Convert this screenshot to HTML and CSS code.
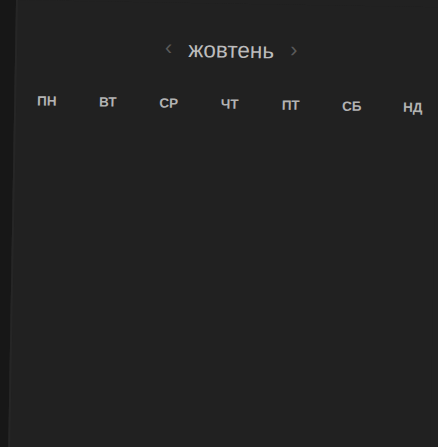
FILE: index.html
```html
<!DOCTYPE html>
<html lang="uk">
<head>
<meta charset="utf-8">
<link rel="stylesheet" href="styles.css">
</head>
<body>
<div class="panel">
  <div class="month">
    <span class="arrow">&lsaquo;</span>
    <span class="title">жовтень</span>
    <span class="arrow">&rsaquo;</span>
  </div>
  <div class="weekdays">
    <span>ПН</span><span>ВТ</span><span>СР</span><span>ЧТ</span><span>ПТ</span><span>СБ</span><span>НД</span>
  </div>
</div>
</body>
</html>
```
FILE: styles.css
```css
html, body {
  margin: 0;
  padding: 0;
  background: #171717;
  overflow: hidden;
  width: 438px;
  height: 447px;
}
.panel {
  margin-left: 16px;
  width: 422px;
  height: 447px;
  background: #212121;
  border-left: 2px solid #262626;
  box-shadow: 40px 0 0 #212121, 0 40px 0 #212121, 0 -40px 0 #212121, 40px -40px 0 #212121, 40px 40px 0 #212121;
  transform: rotate(1deg);
  transform-origin: 0 0;
  font-family: "Liberation Sans", Arial, sans-serif;
  padding-top: 33px;
  box-sizing: border-box;
}
.month {
  display: flex;
  justify-content: center;
  align-items: center;
  gap: 16px;
  width: 428px;
  height: 28px;
}
.title {
  color: #bcbcbc;
  font-size: 22.5px;
}
.arrow {
  color: #5a5a5a;
  font-size: 22px;
  line-height: 1;
  margin-top: -4px;
}
.weekdays {
  display: grid;
  grid-template-columns: repeat(7, 61px);
  margin-top: 32px;
  color: #b3b3b3;
  font-size: 13.5px;
  font-weight: bold;
  text-align: center;
}
```
